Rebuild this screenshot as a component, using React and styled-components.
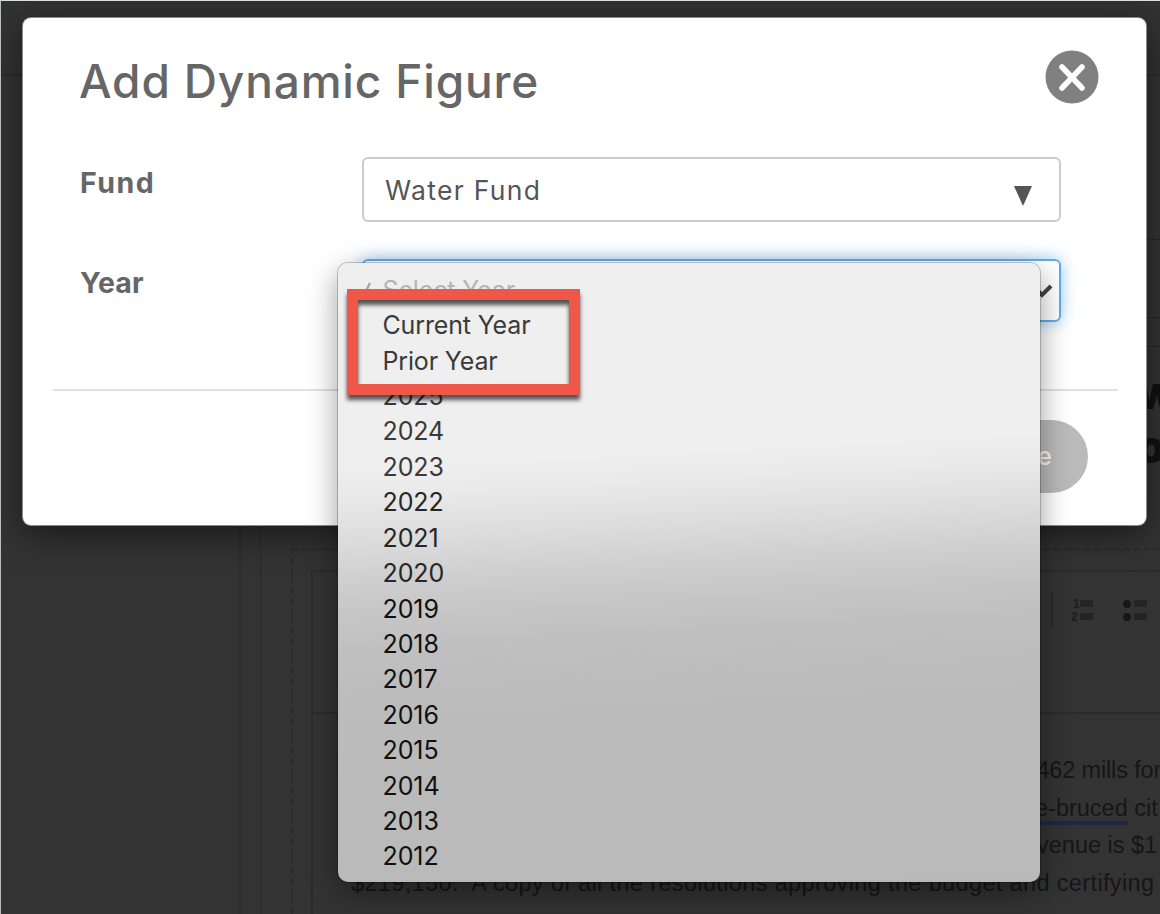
import React from "react";
import styled, { createGlobalStyle } from "styled-components";

const GlobalStyle = createGlobalStyle`
  * {
    box-sizing: border-box;
  }

  body {
    margin: 0;
    background: #333333;
  }
`;

const Screen = styled.div`
  position: relative;
  display: flex;
  flex-direction: column;
  width: 1160px;
  height: 914px;
  overflow: hidden;
  background: #333333;
  border-top: 1px solid #dbe0dd;
  border-left: 1px solid #b9bebb;
`;

const TopBar = styled.div`
  flex: none;
  height: 75px;
  background: #323232;
  border-bottom: 2px solid #2b2b2b;
`;

const Workspace = styled.div`
  flex: 1;
  display: flex;
  min-height: 0;
`;

const Sidebar = styled.div`
  flex: none;
  width: 240px;
  border-right: 2px solid #2b2e2d;
`;

const Gutter = styled.div`
  flex: none;
  width: 20px;
  border-right: 1px solid #292929;
`;

const Document = styled.div`
  flex: 1;
  min-width: 0;
  display: flex;
  flex-direction: column;
  padding-left: 30px;
`;

const TitleBlock = styled.div`
  flex: none;
  height: 310px;
  padding-top: 163px;
`;

const TitleBand = styled.div`
  height: 107px;
  border-top: 1px dashed #222222;
  padding-top: 77px;
`;

const TitleRule = styled.div`
  height: 30px;
  border-top: 1px solid #242424;
  border-bottom: 1px solid #242424;
`;

const Heading = styled.div`
  padding: 20px 0 0 846px;
  font-family: Inter, "Liberation Sans", sans-serif;
  font-size: 45px;
  font-weight: 900;
  line-height: 54px;
  white-space: nowrap;
  color: #111111;
`;

const Block = styled.div`
  flex: 1;
  margin-top: 162px;
  padding: 20px 0 0 18px;
  border-top: 2px dashed #2b2b2b;
  border-left: 2px dashed #2b2b2b;
`;

const Editor = styled.div`
  height: 100%;
  width: 900px;
  border-top: 2px solid #2b2b2b;
  border-left: 2px solid #2b2b2b;
`;

const Toolbar = styled.div`
  display: flex;
  align-items: flex-start;
  height: 142px;
  padding: 21px 0 0 738px;
  border-bottom: 2px solid #2b2b2b;
`;

const ToolDivider = styled.div`
  width: 2px;
  height: 34px;
  margin-right: 17px;
  background: #292929;
`;

const ToolIcon = styled.svg`
  width: 28px;
  height: 28px;
  margin: 3px 24px 0 0;
`;

const Paragraph = styled.div`
  padding: 38px 0 0 38px;
  font-family: "Liberation Sans", Arial, sans-serif;
  font-size: 23.5px;
  line-height: 37.6px;
  color: #161616;
`;

const Line = styled.div`
  padding-left: ${(props) => props.$indent || 0}px;
  letter-spacing: ${(props) => props.$spacing || 0}px;
  white-space: pre;
`;

const Underlined = styled.span`
  border-bottom: 4px solid #1d2848;
`;

const Modal = styled.div`
  position: absolute;
  top: 17px;
  left: 22px;
  width: 1123px;
  height: 507px;
  padding: 0 28px 0 30px;
  border-radius: 8px;
  background: #ffffff;
  box-shadow: 0 0 0 1px #8a8a8a, 0 10px 34px rgba(0, 0, 0, 0.5);
  font-family: Inter, "Open Sans", sans-serif;
`;

const ModalHeader = styled.div`
  display: flex;
  justify-content: space-between;
  height: 139px;
  padding: 32px 19px 0 26px;
`;

const ModalTitle = styled.div`
  font-size: 46px;
  font-weight: 500;
  line-height: 62px;
  letter-spacing: 0.85px;
  color: #666666;
`;

const CloseIcon = styled.svg`
  width: 54px;
  height: 54px;
`;

const Field = styled.div`
  display: flex;
  height: ${(props) => props.$height}px;
  padding-left: 27px;
`;

const FieldLabel = styled.div`
  width: 282px;
  padding-top: ${(props) => props.$top}px;
  font-size: 28.5px;
  font-weight: 700;
  line-height: 34px;
  letter-spacing: ${(props) => props.$spacing}px;
  color: #666666;
`;

const SelectBox = styled.div`
  display: flex;
  align-items: center;
  justify-content: space-between;
  width: 699px;
  height: ${(props) => (props.$focused ? 63 : 65)}px;
  padding: 0 ${(props) => (props.$focused ? 6 : 27)}px 0 21px;
  border: 2px solid ${(props) => (props.$focused ? "#62abe8" : "#cccccc")};
  border-radius: 6px;
  box-shadow: ${(props) =>
    props.$focused ? "0 0 16px rgba(82, 168, 236, 0.6)" : "none"};
  font-size: 26.5px;
  letter-spacing: 1.3px;
  color: #555555;
`;

const Triangle = styled.svg`
  width: 18px;
  height: 20px;
  margin-top: 12px;
`;

const Chevron = styled.svg`
  width: 22px;
  height: 14px;
`;

const ModalFooter = styled.div`
  display: flex;
  justify-content: flex-end;
  padding: 29px 30px 0 0;
  border-top: 2px solid #e1e1e1;
`;

const SaveButton = styled.div`
  width: 148px;
  height: 73px;
  padding-right: 36px;
  border-radius: 37px;
  background: #bababa;
  font-size: 25px;
  font-weight: 500;
  line-height: 73px;
  text-align: right;
  color: #f5f5f5;
`;

const Menu = styled.div`
  position: absolute;
  top: 262px;
  left: 337px;
  width: 702px;
  height: 619px;
  padding-top: 9px;
  border-radius: 10px;
  background: linear-gradient(
    177deg,
    #efefef 0%,
    #efefef 31%,
    #e9e9e9 36%,
    #dddddd 42%,
    #d0d0d0 48%,
    #c7c7c7 53%,
    #c1c1c1 58%,
    #bcbcbc 66%,
    #b9b9b9 100%
  );
  box-shadow: 0 0 0 1px rgba(0, 0, 0, 0.2), 0 10px 30px rgba(0, 0, 0, 0.4);
  font-family: Inter, Roboto, sans-serif;
`;

const MenuItem = styled.div`
  display: flex;
  align-items: center;
  height: 35.43px;
  padding-left: 20px;
  font-size: 25px;
  letter-spacing: ${(props) => props.$spacing || 0}px;
  color: ${(props) => props.$color};
`;

const CheckSlot = styled.div`
  display: flex;
  width: 24.5px;
`;

const Highlight = styled.div`
  position: absolute;
  top: 288px;
  left: 346px;
  width: 233px;
  height: 106px;
  border: 11px solid #ef5848;
  filter: drop-shadow(0 5px 2px rgba(0, 0, 0, 0.65));
`;

const words = ["Current Year", "Prior Year"];

const years = [
  2025, 2024, 2023, 2022, 2021, 2020, 2019, 2018, 2017, 2016, 2015, 2014, 2013,
  2012,
];

function yearColor(year) {
  if (year > 2022) return "#3a3a3a";
  if (year > 2019) return "#262626";
  return "#101010";
}

function DocumentPage() {
  return (
    <Document>
      <TitleBlock>
        <TitleBand>
          <TitleRule />
        </TitleBand>
        <Heading>
          <div>w</div>
          <div>o</div>
        </Heading>
      </TitleBlock>
      <Block>
        <Editor>
          <Toolbar>
            <ToolDivider />
            <ToolIcon viewBox="0 0 28 28">
              <g fill="#1d1d1d" fontFamily="Liberation Sans" fontSize="12" fontWeight="700">
                <text x="3" y="12">1</text>
                <text x="1" y="25">2</text>
              </g>
              <path d="M10 4h13v7h-13zM10 17h13v7h-13z" fill="#242424" />
            </ToolIcon>
            <ToolIcon viewBox="0 0 28 28">
              <circle cx="5" cy="8" r="4" fill="#171717" />
              <circle cx="5" cy="21" r="4" fill="#171717" />
              <path d="M12 4h13v7h-13zM12 17h13v7h-13z" fill="#242424" />
            </ToolIcon>
          </Toolbar>
          <Paragraph>
            <Line $indent={679} $spacing={-0.15}>.462 mills for</Line>
            <Line $indent={684}>
              <Underlined>e-bruced</Underlined> cit
            </Line>
            <Line $indent={686}>venue is $1</Line>
            <Line $spacing={0.36}>
              {"$219,150.  A copy of all the resolutions approving the budget and certifying"}
            </Line>
          </Paragraph>
        </Editor>
      </Block>
    </Document>
  );
}

function FigureModal() {
  return (
    <Modal>
      <ModalHeader>
        <ModalTitle>Add Dynamic Figure</ModalTitle>
        <CloseIcon viewBox="0 0 54 54">
          <circle cx="27" cy="27" r="26.5" fill="#808080" />
          <path
            d="M17 17l20 21M37 17l-20 21"
            stroke="#ffffff"
            strokeWidth="5.5"
            strokeLinecap="round"
          />
        </CloseIcon>
      </ModalHeader>
      <Field $height={102}>
        <FieldLabel $top={9} $spacing={1.5}>Fund</FieldLabel>
        <SelectBox>
          Water Fund
          <Triangle viewBox="0 0 18 20">
            <path d="M0 0h18l-9 20z" fill="#555555" />
          </Triangle>
        </SelectBox>
      </Field>
      <Field $height={130}>
        <FieldLabel $top={7} $spacing={0.2}>Year</FieldLabel>
        <SelectBox $focused>
          <span />
          <Chevron viewBox="0 0 22 14">
            <path d="M2 2l9 9 9-9" fill="none" stroke="#444444" strokeWidth="4" />
          </Chevron>
        </SelectBox>
      </Field>
      <ModalFooter>
        <SaveButton>Save</SaveButton>
      </ModalFooter>
    </Modal>
  );
}

function YearMenu() {
  return (
    <Menu>
      <MenuItem $color="#b5b5b5" $spacing={-0.15}>
        <CheckSlot>
          <svg width="14" height="18" viewBox="0 0 14 18">
            <path d="M2 10l3 6 7-14" fill="none" stroke="#a5a5a5" strokeWidth="2.4" />
          </svg>
        </CheckSlot>
        Select Year
      </MenuItem>
      {words.map((label) => (
        <MenuItem key={label} $color="#3a3a3a" $spacing={-0.15}>
          <CheckSlot />
          {label}
        </MenuItem>
      ))}
      {years.map((year) => (
        <MenuItem key={year} $color={yearColor(year)} $spacing={-0.1}>
          <CheckSlot />
          {year}
        </MenuItem>
      ))}
    </Menu>
  );
}

function App() {
  return (
    <>
      <GlobalStyle />
      <Screen>
        <TopBar />
        <Workspace>
          <Sidebar />
          <Gutter />
          <DocumentPage />
        </Workspace>
        <FigureModal />
        <YearMenu />
        <Highlight />
      </Screen>
    </>
  );
}

export default App;
